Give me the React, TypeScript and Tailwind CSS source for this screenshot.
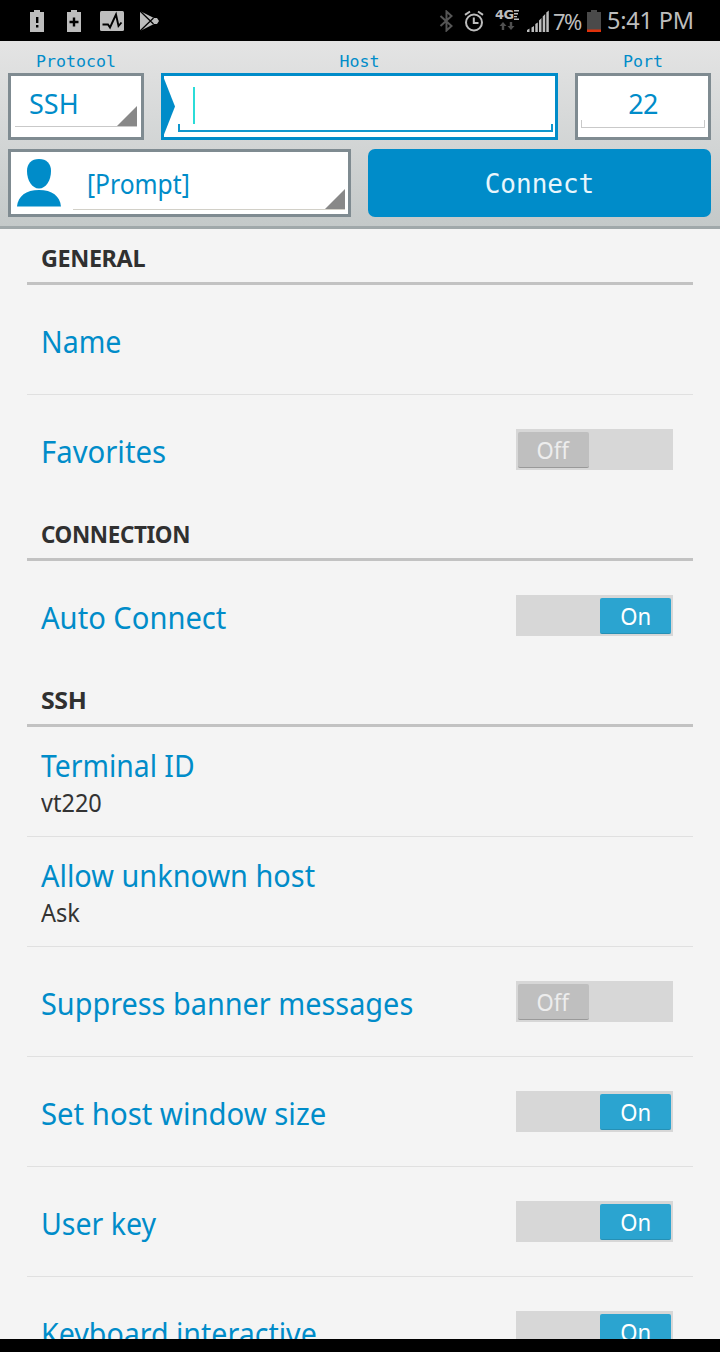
import { ReactNode } from "react";
import clsx from "clsx";

type SwitchProps = {
  isOn: boolean;
};

type RowProps = {
  title: string;
  titleClass: string;
  value?: string;
  isOn?: boolean;
  isLast?: boolean;
};

type Section = {
  heading: string;
  headingClass: string;
  rows: RowProps[];
};

const sections: Section[] = [
  {
    heading: "GENERAL",
    headingClass: "scale-x-[0.975]",
    rows: [
      { title: "Name", titleClass: "scale-x-[0.92]" },
      { title: "Favorites", titleClass: "scale-x-[0.945]", isOn: false },
    ],
  },
  {
    heading: "CONNECTION",
    headingClass: "scale-x-[0.935]",
    rows: [{ title: "Auto Connect", titleClass: "scale-x-[0.94]", isOn: true }],
  },
  {
    heading: "SSH",
    headingClass: "scale-x-[1.04]",
    rows: [
      { title: "Terminal ID", titleClass: "scale-x-[0.914]", value: "vt220" },
      { title: "Allow unknown host", titleClass: "scale-x-[0.932]", value: "Ask" },
      { title: "Suppress banner messages", titleClass: "scale-x-[0.931]", isOn: false },
      { title: "Set host window size", titleClass: "scale-x-[0.945]", isOn: true },
      { title: "User key", titleClass: "scale-x-[0.92]", isOn: true },
      { title: "Keyboard interactive", titleClass: "scale-x-[0.922]", isOn: true },
    ],
  },
];

function StatusBar() {
  return (
    <div className="flex h-[41px] shrink-0 items-center bg-black pr-[26px] pl-[29px] text-[#bdbdbd]">
      <svg width="16" height="24" viewBox="0 0 16 24" fill="currentColor">
        <path d="M5 1h6v2h4v20H1V3h4z" />
        <path d="M7 8h2.4v6H7zM7 16h2.4v2.4H7z" fill="#000" />
      </svg>
      <svg className="ml-[21px]" width="16" height="24" viewBox="0 0 16 24" fill="currentColor">
        <path d="M5 1h6v2h4v20H1V3h4z" />
        <path d="M6.8 8.500h2.400v3.300h3.300v2.400H9.200v3.300H6.800v-3.300H3.500v-2.400h3.300z" fill="#000" />
      </svg>
      <svg className="ml-[18px]" width="24" height="20" viewBox="0 0 24 20">
        <rect width="24" height="20" rx="1.500" fill="currentColor" />
        <path
          d="M2.500 13.500h5.500l2 3 6-13 2.500 11.500 3-3.500"
          fill="none"
          stroke="#000"
          strokeWidth="1.900"
        />
      </svg>
      <svg className="ml-[15px]" width="21" height="22" viewBox="0 0 21 22" fill="currentColor">
        <path d="M1 1l14 7h3l2 3-2 3h-3L1 21z" />
        <path d="M1 1l13.500 13M1 21L14.500 8" stroke="#000" strokeWidth="1.300" />
      </svg>

      <svg className="ml-auto" width="15" height="22" viewBox="0 0 15 22" fill="none" stroke="#555" strokeWidth="2">
        <path d="M1.500 6l11 10L7.500 20.500v-19l5 4.500-11 10" />
      </svg>
      <svg className="ml-[10px]" width="20" height="22" viewBox="0 0 20 22" fill="none" stroke="currentColor" strokeWidth="2">
        <circle cx="10" cy="12.500" r="8" />
        <path d="M9.800 7.500v5.500h4.700M1 4.800L6 1.500M19 4.800L14 1.500" />
      </svg>
      <div className="ml-[11px] flex h-[23px] w-[26px] flex-col">
        <div className="flex h-[12px] items-start">
          <span className="w-[19px] origin-left scale-x-[1.080] font-['DejaVu_Sans'] text-[12px] leading-[12px] font-bold tracking-[-0.5px]">
            4G
          </span>
          <svg className="mt-px" width="5" height="10" viewBox="0 0 5 10" fill="currentColor">
            <path d="M0 0h5v1.500H0zM0 3h4v1.500H0zM0 6h3v1.200H0zM0 8.500h5V10H0z" />
          </svg>
        </div>
        <svg className="ml-[3px]" width="18" height="10" viewBox="0 0 18 10" fill="#505050">
          <path d="M5 1l3.500 4H6.200v4H3.800V5H1.500zM13 9L9.500 5h2.300V1h2.400v4h2.300z" />
        </svg>
      </div>
      <svg className="ml-[6px]" width="22" height="22" viewBox="0 0 22 22" fill="currentColor">
        <path d="M0 22v-2l2.500-1.500V22zM4.500 17.500L7 16v6H4.500zM8.300 14l2.500-1.500V22H8.300zM12 10.500L14.500 8v14H12zM15.700 6.500L18.200 4v18h-2.500zM19.300 2.500L21.800.500V22h-2.500z" />
      </svg>
      <span className="ml-[4px] w-[30px] font-['Noto_Sans'] text-[22px] leading-none tracking-[-1.500px]">
        7%
      </span>
      <svg className="ml-[4px]" width="14" height="22" viewBox="0 0 14 22">
        <path d="M4 0h6v2h4v18H0V2h4z" fill="#4a4a4a" />
        <path d="M0 19.500h14V22H0z" fill="#e0310a" />
      </svg>
      <span className="ml-[6px] w-[87px] font-['Noto_Sans'] text-[23.500px] leading-none tracking-[-0.200px] whitespace-nowrap">
        5:41 PM
      </span>
    </div>
  );
}

function FieldLabel({ children }: { children: ReactNode }) {
  return (
    <span className="h-[32px] pt-[11px] text-center font-['DejaVu_Sans_Mono'] text-[16.600px] leading-[20px]">
      {children}
    </span>
  );
}

function SpinnerCorner() {
  return (
    <svg className="absolute right-0 bottom-0" width="20" height="20" viewBox="0 0 20 20">
      <path d="M20 0v20H0z" fill="#888" />
    </svg>
  );
}

function ConnectionBar() {
  return (
    <div className="h-[188px] shrink-0 border-b-[3px] border-[#a0a8aa] bg-linear-to-b from-[#e4e4e4] to-[#c4c9c9] px-[8px] text-[#008cc9]">
      <div className="flex gap-[17px]">
        <div className="flex w-[136px] flex-col">
          <FieldLabel>Protocol</FieldLabel>
          <div className="h-[67px] border-[3.500px] border-[#7f8b91] bg-white px-[4px]">
            <div className="relative h-[51px] border-b border-[#c9c9c9] pl-[14px]">
              <span className="inline-block origin-left font-['Noto_Sans'] text-[27px] leading-[55px]">
                SSH
              </span>
              <SpinnerCorner />
            </div>
          </div>
        </div>
        <div className="flex w-[397px] flex-col">
          <FieldLabel>Host</FieldLabel>
          <div className="flex h-[67px] border-[3.500px] border-[#008cc9] bg-white pr-[2px]">
            <svg className="-ml-px shrink-0" width="12" height="61" viewBox="0 0 12 61">
              <path d="M0 0l12 30.500L0 61z" fill="#008cc9" />
            </svg>
            <div className="ml-[3px] flex h-[55.500px] grow flex-col">
              <div className="mt-[11px] ml-[15px] h-[37px] w-[2px] bg-[#2bdcd8]" />
              <div className="mt-auto h-[8px] border-x-2 border-b-2 border-[#0f96cd]" />
            </div>
          </div>
        </div>
        <div className="flex w-[136px] flex-col">
          <FieldLabel>Port</FieldLabel>
          <div className="flex h-[67px] flex-col border-[3.500px] border-[#7f8b91] bg-white px-[3px]">
            <span className="h-[44px] text-center font-['Noto_Sans'] text-[27px] leading-[55px] tracking-[-0.800px]">
              22
            </span>
            <div className="h-[8px] border-x border-b border-[#c9c9c9]" />
          </div>
        </div>
      </div>
      <div className="mt-[9px] flex gap-[17px]">
        <div className="flex h-[68px] w-[343px] border-[3.500px] border-[#7f8b91] bg-white pr-[3px]">
          <svg className="mt-[7px] ml-[6px] shrink-0" width="44" height="48" viewBox="0 0 44 48" fill="#008cc9">
            <path d="M22 0c7.500 0 12 4.500 12 12 0 9.500-5 17.500-12 17.500S10 21.500 10 12C10 4.500 14.500 0 22 0z" />
            <path d="M0 47.500C1 37 9 31 22 31s21 6 22 16.500z" />
          </svg>
          <div className="relative ml-[12px] h-[58px] grow border-b border-[#d2d0c8] pl-[14px]">
            <span className="inline-block origin-left scale-x-[0.912] font-['Noto_Sans'] text-[27px] leading-[63px]">
              [Prompt]
            </span>
            <SpinnerCorner />
          </div>
        </div>
        <button className="h-[68px] w-[343px] rounded-[7px] bg-[#008cc9] pt-[2px] font-['DejaVu_Sans_Mono'] text-[26px] text-[#e8f6fc]">
          Connect
        </button>
      </div>
    </div>
  );
}

function Switch({ isOn }: SwitchProps) {
  return (
    <div
      className={clsx(
        "mt-[34px] flex h-[41px] w-[157px] shrink-0 bg-[#d7d7d7] pr-[2px] pl-[1.500px] pt-[3px]",
        isOn && "justify-end"
      )}
    >
      <span
        className={clsx(
          "h-[36px] w-[71px] rounded-[2px] border-b-[1.500px] text-center font-['Noto_Sans'] text-[24px] leading-[35px]",
          isOn
            ? "border-[#2690b5] bg-[#2ba4d0] text-white"
            : "border-[#999] bg-[#bfbfbf] text-[#ededed]"
        )}
      >
        <span className="inline-block scale-x-[0.92]">{isOn ? "On" : "Off"}</span>
      </span>
    </div>
  );
}

function Row({ title, titleClass, value, isOn, isLast }: RowProps) {
  return (
    <div
      className={clsx(
        "flex h-[110px] shrink-0 justify-between border-b pr-[20px] pl-[14px]",
        isLast ? "border-transparent" : "border-[#e0e0e0]"
      )}
    >
      <div className={clsx("flex flex-col", value ? "pt-[18px]" : "pt-[35.500px]")}>
        <span
          className={clsx(
            "origin-left text-[31px] leading-[40px] whitespace-nowrap text-[#008cc9]",
            titleClass
          )}
        >
          {title}
        </span>
        {value && (
          <span className="origin-left scale-x-[0.96] text-[24.500px] leading-[35px] text-[#333]">
            {value}
          </span>
        )}
      </div>
      {isOn !== undefined && <Switch isOn={isOn} />}
    </div>
  );
}

export default function App() {
  return (
    <div className="flex h-[1352px] w-[720px] flex-col overflow-hidden bg-black">
      <StatusBar />
      <ConnectionBar />
      <div className="flex h-[1110px] shrink-0 flex-col overflow-hidden bg-[#f4f4f4] px-[27px] font-['Noto_Sans',sans-serif]">
        {sections.map(({ heading, headingClass, rows }) => (
          <section key={heading} className="shrink-0">
            <h2 className="h-[56px] border-b-[3px] border-[#c2c2c2] pt-[14px] pl-[14px] text-[24px] leading-[30px] font-bold tracking-[-0.400px] text-[#303030]">
              <span className={clsx("inline-block origin-left", headingClass)}>{heading}</span>
            </h2>
            {rows.map((row, index) => (
              <Row key={row.title} {...row} isLast={index === rows.length - 1} />
            ))}
          </section>
        ))}
      </div>
    </div>
  );
}
